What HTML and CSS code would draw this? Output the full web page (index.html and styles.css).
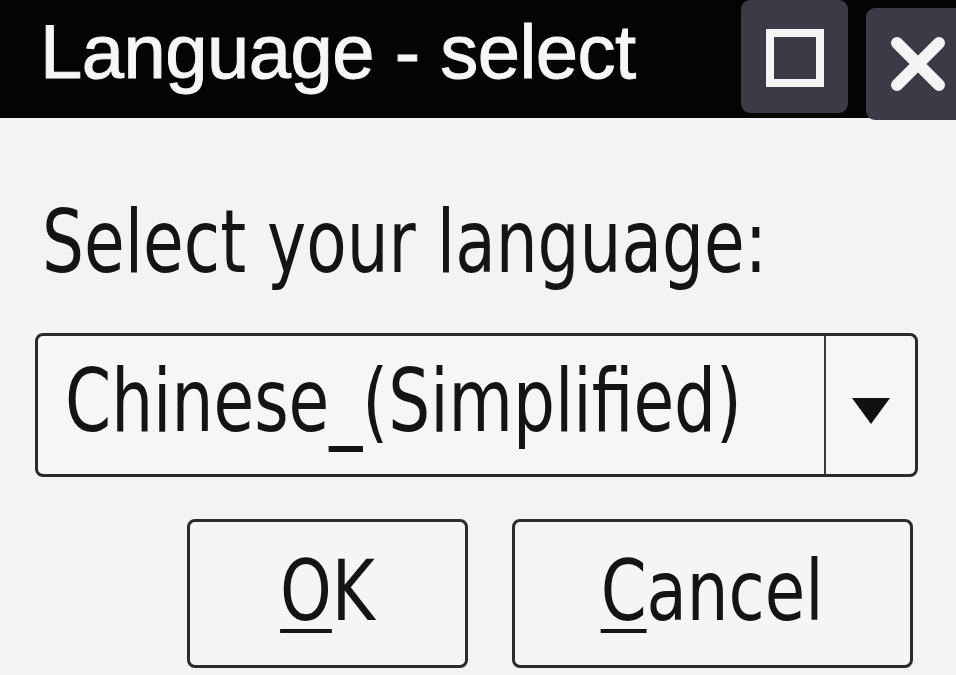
FILE: index.html
```html
<!DOCTYPE html>
<html lang="en">
<head>
<meta charset="utf-8">
<title>Language - select</title>
<link rel="stylesheet" href="styles.css">
</head>
<body>
<div class="window">
  <header class="titlebar">
    <div class="title">Language - select</div>
    <div class="controls">
      <button class="ctl ctl-max" aria-label="Maximize">
        <svg width="58" height="58" viewBox="0 0 58 58"><rect x="4" y="4" width="50" height="50" fill="none" stroke="#f4f4f4" stroke-width="8"/></svg>
      </button>
      <button class="ctl ctl-close" aria-label="Close">
        <svg width="56" height="56" viewBox="0 0 56 56"><path d="M7 7 L49 49 M49 7 L7 49" stroke="#f4f4f4" stroke-width="12" stroke-linecap="round"/></svg>
      </button>
    </div>
  </header>
  <main class="content">
    <div class="label"><span class="narrow">Select your language:</span></div>
    <div class="combo">
      <div class="combo-value"><span class="narrow">Chinese_(Simplified)</span></div>
      <div class="combo-arrow">
        <svg width="38" height="26" viewBox="0 0 38 26"><path d="M0 0 H38 L19 26 Z" fill="#111"/></svg>
      </div>
    </div>
    <div class="actions">
      <button class="btn btn-ok"><span class="narrow-c"><span class="mn">O</span>K</span></button>
      <button class="btn btn-cancel"><span class="narrow-c"><span class="mn">C</span>ancel</span></button>
    </div>
  </main>
</div>
</body>
</html>
```

FILE: styles.css
```css
html, body {
  margin: 0;
  padding: 0;
  background: #f3f3f1;
  width: 956px;
  height: 675px;
  overflow: hidden;
}
.window {
  font-family: "DejaVu Sans Condensed", "DejaVu Sans", sans-serif;
  color: #141414;
}
.titlebar {
  height: 118px;
  background: #040404;
  display: flex;
  align-items: flex-start;
  padding-left: 40px;
}
.title {
  font-family: "Liberation Sans", sans-serif;
  font-size: 76px;
  line-height: 100px;
  color: #f6f6f6;
  padding-top: 2px;
  letter-spacing: -0.5px;
  -webkit-text-stroke: 1px #f6f6f6;
}
.controls {
  margin-left: auto;
  display: flex;
  gap: 18px;
}
.ctl {
  border: none;
  padding: 0;
  margin: 0;
  background: #3b3b48;
  border-radius: 9px;
  display: flex;
  align-items: center;
  justify-content: center;
}
.ctl-max {
  width: 107px;
  height: 113px;
  padding-top: 3px;
}
.ctl-close {
  width: 90px;
  height: 112px;
  margin-top: 8px;
  border-radius: 9px 0 0 9px;
  justify-content: flex-start;
  padding-left: 24px;
}
.content {
  padding: 74px 38px 0 35px;
}
.narrow {
  display: inline-block;
  transform: scaleX(0.845);
  transform-origin: left center;
  white-space: nowrap;
}
.narrow-c {
  display: inline-block;
  transform: scaleX(0.87);
  transform-origin: center center;
  white-space: nowrap;
}
.label {
  font-size: 87px;
  line-height: 100px;
  padding-left: 7px;
}
.combo {
  margin-top: 41px;
  height: 144px;
  box-sizing: border-box;
  border: 3px solid #2b2b2b;
  border-radius: 8px;
  background: #f6f6f4;
  display: flex;
}
.combo-value {
  flex: 1;
  min-width: 0;
  font-size: 87px;
  line-height: 100px;
  padding-left: 27px;
  display: flex;
  align-items: center;
  padding-bottom: 8px;
}
.combo-arrow {
  flex: 0 0 89px;
  border-left: 2px solid #3a3a3a;
  display: flex;
  align-items: center;
  justify-content: center;
  padding-top: 12px;
}
.actions {
  margin-top: 42px;
  display: flex;
  justify-content: flex-end;
  gap: 44px;
  padding-right: 5px;
}
.btn {
  height: 149px;
  box-sizing: border-box;
  border: 3px solid #2b2b2b;
  border-radius: 8px;
  background: #f5f5f3;
  font-family: "DejaVu Sans Condensed", "DejaVu Sans", sans-serif;
  font-size: 84px;
  color: #141414;
  padding: 0 0 6px 0;
}
.btn-ok {
  width: 281px;
}
.btn-cancel {
  width: 401px;
}
.mn {
  text-decoration: underline;
  text-decoration-thickness: 4px;
  text-underline-offset: 9px;
}
```
